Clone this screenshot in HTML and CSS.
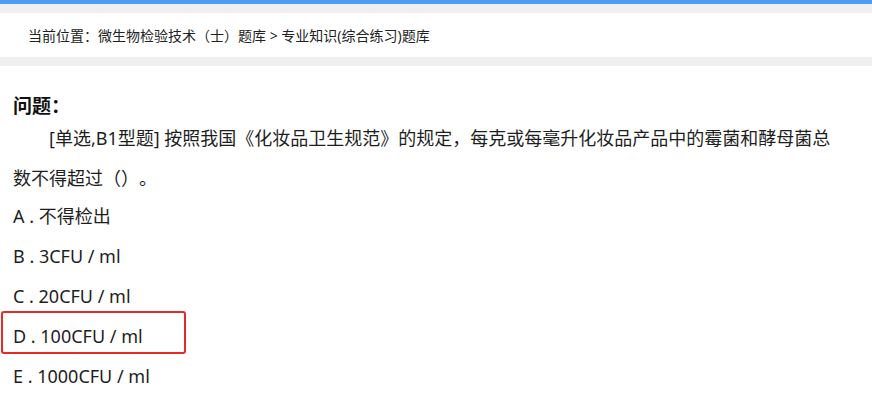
FILE: index.html
```html
<!DOCTYPE html>
<html lang="zh">
<head>
<meta charset="utf-8">
<title>题库</title>
<link rel="stylesheet" href="styles.css">
</head>
<body>
<div class="topbar"></div>
<div class="crumb-band">
  <div class="crumb">当前位置：微生物检验技术（士）题库 &gt; 专业知识(综合练习)题库</div>
</div>
<div class="content">
  <h2 class="q-title">问题：</h2>
  <p class="q-text">[单选,B1型题] 按照我国《化妆品卫生规范》的规定，每克或每毫升化妆品产品中的霉菌和酵母菌总数不得超过（）。</p>
  <div class="option">A . 不得检出</div>
  <div class="option">B . 3CFU / ml</div>
  <div class="option">C . 20CFU / ml</div>
  <div class="option marked">D . 100CFU / ml</div>
  <div class="option">E . 1000CFU / ml</div>
</div>
</body>
</html>
```

FILE: styles.css
```css
html, body {
  margin: 0;
  padding: 0;
  background: #ffffff;
  font-family: "Microsoft YaHei", "Noto Sans", "Noto Sans CJK SC", sans-serif;
  color: #1e1e1e;
  text-spacing-trim: space-all;
}
.topbar {
  height: 4px;
  background: #4d9ef3;
}
.crumb-band {
  background: #efefef;
  padding: 9px 0;
}
.crumb {
  background: #ffffff;
  height: 44px;
  line-height: 46px;
  padding-left: 28px;
  font-size: 14px;
  color: #222;
}
.content {
  padding: 28px 0 0 13px;
  width: 826px;
}
.q-title {
  margin: 0;
  font-size: 19px;
  line-height: 24px;
  font-weight: bold;
  color: #111;
}
.q-text {
  margin: 0 0 -2px;
  font-size: 18px;
  line-height: 40px;
  text-indent: 2em;
}
.option {
  font-size: 18px;
  line-height: 40px;
}
.marked {
  position: relative;
}
.marked::after {
  content: "";
  position: absolute;
  left: -12px;
  top: -5px;
  width: 181px;
  height: 39px;
  border: 2px solid #e52b28;
  border-radius: 3px;
}
```
